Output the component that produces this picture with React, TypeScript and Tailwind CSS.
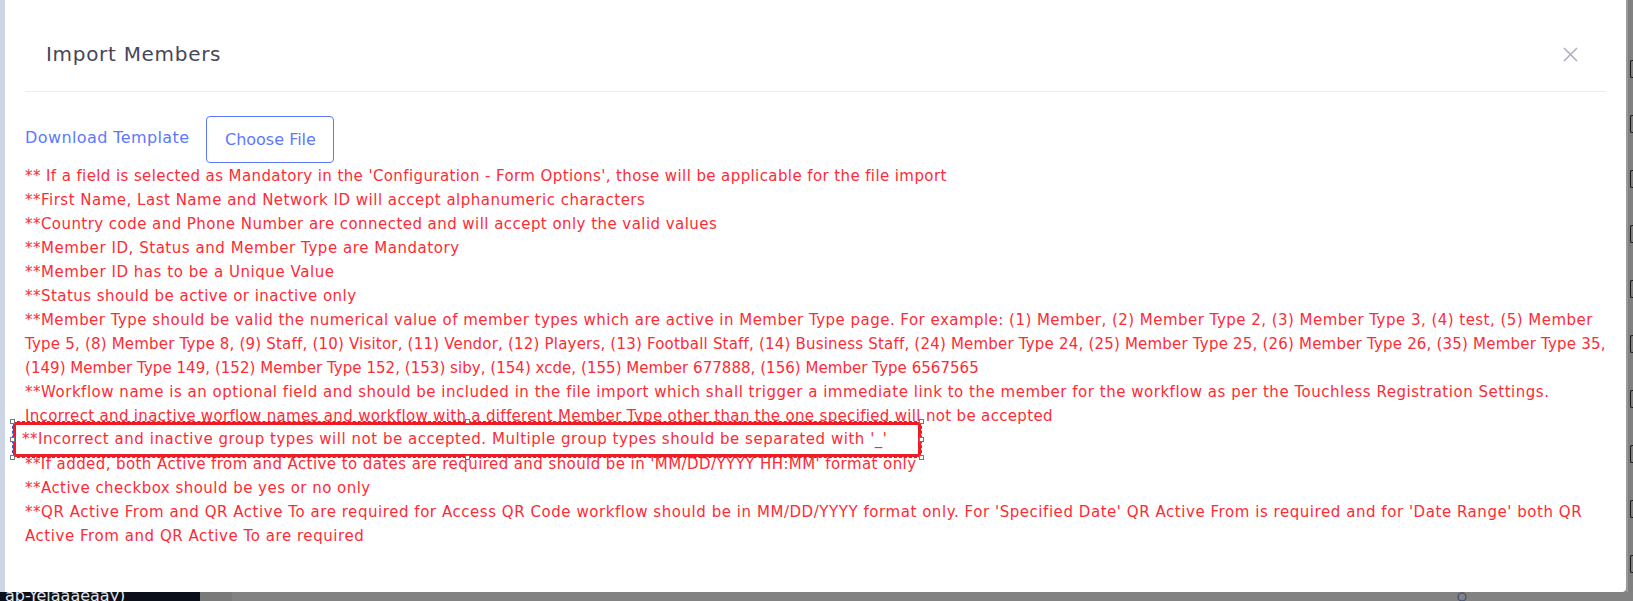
const notes: [string, string][] = [
  ["** If a field is selected as Mandatory in the 'Configuration - Form Options', those will be applicable for the file import", "tracking-[0.4px]"],
  ["**First Name, Last Name and Network ID will accept alphanumeric characters", "tracking-[0.5px]"],
  ["**Country code and Phone Number are connected and will accept only the valid values", "tracking-[0.45px]"],
  ["**Member ID, Status and Member Type are Mandatory", "tracking-[0.55px]"],
  ["**Member ID has to be a Unique Value", "tracking-[0.55px]"],
  ["**Status should be active or inactive only", "tracking-[0.47px]"],
  ["**Member Type should be valid the numerical value of member types which are active in Member Type page. For example: (1) Member, (2) Member Type 2, (3) Member Type 3, (4) test, (5) Member", "tracking-[0.47px]"],
  ["Type 5, (8) Member Type 8, (9) Staff, (10) Visitor, (11) Vendor, (12) Players, (13) Football Staff, (14) Business Staff, (24) Member Type 24, (25) Member Type 25, (26) Member Type 26, (35) Member Type 35,", "tracking-[0.2px]"],
  ["(149) Member Type 149, (152) Member Type 152, (153) siby, (154) xcde, (155) Member 677888, (156) Member Type 6567565", "tracking-[0.04px]"],
  ["**Workflow name is an optional field and should be included in the file import which shall trigger a immediate link to the member for the workflow as per the Touchless Registration Settings.", "tracking-[0.52px]"],
  ["Incorrect and inactive worflow names and workflow with a different Member Type other than the one specified will not be accepted", "tracking-[0.33px]"],
  ["**Incorrect and inactive group types will not be accepted. Multiple group types should be separated with '_'", "tracking-[0.53px]"],
  ["**If added, both Active from and Active to dates are required and should be in 'MM/DD/YYYY HH:MM' format only", "tracking-[0.42px]"],
  ["**Active checkbox should be yes or no only", "tracking-[0.47px]"],
  ["**QR Active From and QR Active To are required for Access QR Code workflow should be in MM/DD/YYYY format only. For 'Specified Date' QR Active From is required and for 'Date Range' both QR", "tracking-[0.55px]"],
  ["Active From and QR Active To are required", "tracking-[0.55px]"],
]

const font = { fontFamily: "'DejaVu Sans', sans-serif" }

function Handle({ className }: { className: string }) {
  return <span className={"absolute w-[5px] h-[5px] bg-white border border-[#777] " + className} />
}

export default function App() {
  return (
    <div className="relative w-[1633px] h-[601px] overflow-hidden bg-[#808080]" style={font}>
      <div className="flex h-[592px]">
        <div className="w-[5px] bg-[#cdd6e4]" />

        {/* modal */}
        <div className="w-[1621px] bg-white rounded-br-[4px]">
          <div className="mx-[20px] border-b border-[#ebedf2] pt-[40px] pb-[23px] flex items-center justify-between">
            <h3 className="ml-[21px] text-[20px] leading-[28px] tracking-[0.7px] text-[#48465b]">Import Members</h3>
            <button className="mr-[28px] text-[#a9adbf]">
              <svg width="15" height="15" viewBox="0 0 15 15" fill="none" stroke="currentColor" strokeWidth="1.5">
                <path d="M1 1l13 13M14 1L1 14" />
              </svg>
            </button>
          </div>

          <div className="px-[20px] pt-[24px]">
            <div className="flex items-center gap-[17px]">
              <a className="text-[16px] tracking-[0.4px] text-[#5d78ff] -mt-[3px]">Download Template</a>
              <button className="w-[128px] h-[47px] rounded-[4px] border border-[#5d78ff] text-[16px] text-[#5d78ff]">
                Choose File
              </button>
            </div>
            <div className="pt-[1px] text-[15px] leading-[24px] text-[#fd2b36]">
              {notes.map(([n, t], i) => (
                <div key={i} className={"whitespace-nowrap " + t}>{n}</div>
              ))}
            </div>
          </div>
        </div>

        <div className="w-[7px] flex flex-col pt-[60px] gap-[37px] border-l-2 border-[#9a9a9a]">
          {Array.from({ length: 10 }).map((_, i) => (
            <div key={i} className="ml-[2px] h-[18px] border border-r-0 border-[#1b1b1b] rounded-l-[2px]" />
          ))}
        </div>
      </div>

      <div className="flex h-[9px]">
        <div className="w-[200px] bg-[#0b0f19] overflow-hidden">
          <div className="pl-[5px] -mt-[5px] text-[16px] leading-[18px] text-[#e5e7eb] whitespace-nowrap">ap-Yelaaaeaay)</div>
        </div>
        <div className="w-[32px] bg-[#7a7a7a]" />
        <div className="flex-1 bg-[#828282] relative">
          <svg className="absolute left-[1222px] -top-[2px]" width="16" height="12" viewBox="0 0 16 12" fill="none" stroke="#4a5578" strokeWidth="1.5">
            <circle cx="8" cy="7" r="4" />
          </svg>
        </div>
      </div>

      {/* selection box over group types line */}
      <div className="absolute left-[12px] top-[421px] w-[910px] h-[37px] border border-dashed border-[#3355cc]">
        <div className="h-full border-[3px] border-[#ee1c25] bg-white pl-[6px] text-[15px] leading-[29px] tracking-[0.53px] text-[#fd2b36] whitespace-nowrap">
          {notes[11][0]}
        </div>
        <Handle className="-left-[3px] -top-[3px]" />
        <Handle className="left-[452px] -top-[3px]" />
        <Handle className="-right-[3px] -top-[3px]" />
        <Handle className="-left-[3px] top-[15px]" />
        <Handle className="-right-[3px] top-[15px]" />
        <Handle className="-left-[3px] -bottom-[3px]" />
        <Handle className="left-[452px] -bottom-[3px]" />
        <Handle className="-right-[3px] -bottom-[3px]" />
      </div>
    </div>
  )
}
